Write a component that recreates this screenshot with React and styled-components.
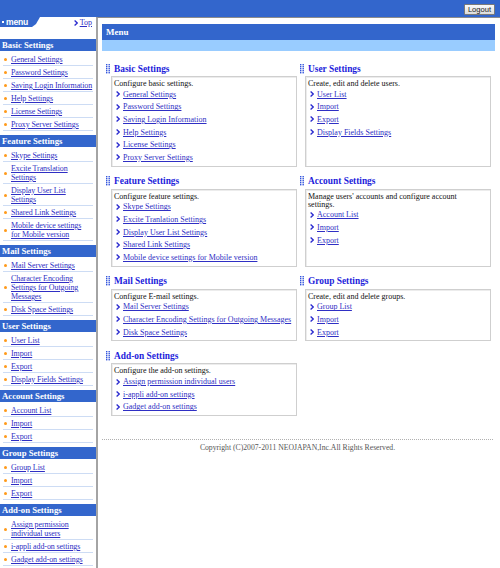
import React from 'react';
import styled, { createGlobalStyle } from 'styled-components';

const GlobalStyle = createGlobalStyle`
  html, body {
    margin: 0;
    padding: 0;
    overflow: hidden;
    background: #fff;
    font-family: 'Liberation Serif', 'Times New Roman', serif;
  }
`;

const BLUE = '#3366cc';
const LINK = '#2f2fc4';

const sideMenu = [
  {
    title: 'Basic Settings',
    items: ['General Settings', 'Password Settings', 'Saving Login Information', 'Help Settings', 'License Settings', 'Proxy Server Settings'],
  },
  {
    title: 'Feature Settings',
    items: ['Skype Settings', 'Excite Translation\nSettings', 'Display User List\nSettings', 'Shared Link Settings', 'Mobile device settings\nfor Mobile version'],
  },
  {
    title: 'Mail Settings',
    items: ['Mail Server Settings', 'Character Encoding\nSettings for Outgoing\nMessages', 'Disk Space Settings'],
  },
  { title: 'User Settings', items: ['User List', 'Import', 'Export', 'Display Fields Settings'] },
  { title: 'Account Settings', items: ['Account List', 'Import', 'Export'] },
  { title: 'Group Settings', items: ['Group List', 'Import', 'Export'] },
  {
    title: 'Add-on Settings',
    items: ['Assign permission\nindividual users', 'i-appli add-on settings', 'Gadget add-on settings'],
  },
];

const panels = [
  {
    title: 'Basic Settings',
    desc: 'Configure basic settings.',
    links: ['General Settings', 'Password Settings', 'Saving Login Information', 'Help Settings', 'License Settings', 'Proxy Server Settings'],
  },
  {
    title: 'User Settings',
    desc: 'Create, edit and delete users.',
    links: ['User List', 'Import', 'Export', 'Display Fields Settings'],
  },
  {
    title: 'Feature Settings',
    desc: 'Configure feature settings.',
    links: ['Skype Settings', 'Excite Tranlation Settings', 'Display User List Settings', 'Shared Link Settings', 'Mobile device settings for Mobile version'],
  },
  {
    title: 'Account Settings',
    desc: "Manage users' accounts and configure account\nsettings.",
    links: ['Account List', 'Import', 'Export'],
  },
  {
    title: 'Mail Settings',
    desc: 'Configure E-mail settings.',
    links: ['Mail Server Settings', 'Character Encoding Settings for Outgoing Messages', 'Disk Space Settings'],
  },
  {
    title: 'Group Settings',
    desc: 'Create, edit and delete groups.',
    links: ['Group List', 'Import', 'Export'],
  },
  {
    title: 'Add-on Settings',
    desc: 'Configure the add-on settings.',
    links: ['Assign permission individual users', 'i-appli add-on settings', 'Gadget add-on settings'],
  },
];

const Page = styled.div`
  width: 500px;
  height: 568px;
  overflow: hidden;
  display: flex;
  flex-direction: column;
`;

const TopBar = styled.div`
  height: 17px;
  flex-shrink: 0;
  background: ${BLUE};
  display: flex;
  justify-content: flex-end;
  align-items: flex-start;
  padding: 4px 5px 0 0;
  box-sizing: border-box;
`;

const LogoutButton = styled.button`
  width: 31px;
  height: 11px;
  padding: 0;
  border: 1px solid #7a7a7a;
  border-radius: 1px;
  background: linear-gradient(#fafafa, #dcdcdc);
  font-family: 'Liberation Sans', Arial, sans-serif;
  font-size: 7.6px;
  line-height: 9px;
  color: #222;
`;

const Body = styled.div`
  flex: 1;
  display: flex;
  min-height: 0;
`;

const Sidebar = styled.div`
  width: 96px;
  flex-shrink: 0;
`;

const SideTop = styled.div`
  height: 22px;
  display: flex;
  align-items: flex-start;
  justify-content: space-between;
`;

const MenuTab = styled.div`
  width: 40px;
  height: 10px;
  background: ${BLUE};
  clip-path: polygon(0 0, 40px 0, 36px 7px, 32px 10px, 0 10px);
  display: flex;
  align-items: center;
  gap: 1px;
  padding-left: 2px;
  box-sizing: border-box;
  color: #fff;
  font-family: 'Liberation Sans', Arial, sans-serif;
  font-weight: bold;
  font-size: 8.6px;
  letter-spacing: -0.2px;
`;

const TabDot = styled.span`
  width: 2px;
  height: 2px;
  background: #fff;
  margin-right: 1px;
`;

const TopLink = styled.a`
  display: flex;
  align-items: center;
  gap: 2px;
  margin: 1px 4px 0 0;
  font-size: 8px;
  line-height: 10px;
  color: ${LINK};
  text-decoration: underline;
`;

const SideHeader = styled.div`
  height: 12px;
  background: ${BLUE};
  color: #fff;
  font-weight: bold;
  font-size: 8.7px;
  line-height: 12px;
  padding-left: 2px;
  white-space: nowrap;
`;

const SideList = styled.div`
  padding: 2px 0 4px;
`;

const SideItem = styled.div`
  display: flex;
  align-items: center;
  margin: 0 3px;
  padding: 2px 0 1px 1px;
  border-bottom: 1px solid #cddcf4;
`;

const Bullet = styled.span`
  width: 3px;
  height: 3px;
  border-radius: 50%;
  background: #ff9a1a;
  flex-shrink: 0;
  margin-right: 4px;
`;

const SideLink = styled.a`
  font-size: 8px;
  line-height: 9px;
  letter-spacing: -0.1px;
  color: ${LINK};
  text-decoration: underline;
  white-space: pre;
`;

const Main = styled.div`
  flex: 1;
  border-top: 1px solid #8c8c8c;
  border-left: 2px solid #a4a4a4;
  padding: 6px 5px 0 4px;
  box-sizing: border-box;
`;

const MenuBar = styled.div`
  height: 16px;
  background: ${BLUE};
  color: #fff;
  font-weight: bold;
  font-size: 9px;
  line-height: 16px;
  padding-left: 4px;
`;

const MenuBand = styled.div`
  height: 11px;
  background: #99ccff;
`;

const Grid = styled.div`
  display: grid;
  grid-template-columns: 192px 192px;
  column-gap: 2px;
  margin: 10px 0 0 3px;
`;

const Section = styled.div`
  display: flex;
  flex-direction: column;
  margin-bottom: 7px;
`;

const SectionTitle = styled.div`
  height: 15px;
  display: flex;
  align-items: center;
  padding-left: 1px;
  color: #1d1ddb;
  font-weight: bold;
  font-size: 9.4px;
`;

const TitleText = styled.span`
  margin-left: 4px;
`;

const Box = styled.div`
  flex: 1;
  margin-left: 6px;
  border: 1px solid #cfcfcf;
  box-shadow: inset 1px 1px 0 #ececec;
  padding: 3px 4px 2px 2px;
`;

const Desc = styled.div`
  font-size: 8px;
  line-height: 8px;
  color: #111;
  white-space: pre-line;
`;

const LinkRow = styled.div`
  height: 12.6px;
  display: flex;
  align-items: center;
  padding-left: 2px;
  gap: 3px;
`;

const BoxLink = styled.a`
  font-size: 8px;
  line-height: 9px;
  color: ${LINK};
  text-decoration: underline;
  white-space: nowrap;
`;

const Footer = styled.div`
  margin: 16px 2px 0 0;
  border-top: 1px dotted #b0b0b0;
  padding-top: 3px;
  text-align: center;
  font-size: 7.7px;
  line-height: 10px;
  color: #555;
`;

const Chevron = () => (
  <svg width="4" height="6" viewBox="0 0 4 6">
    <polyline points="0.6,0.6 3.2,3 0.6,5.4" fill="none" stroke="#2a2ad0" strokeWidth="1.3" />
  </svg>
);

const Grip = () => (
  <svg width="4" height="10" viewBox="0 0 4 10">
    {[0, 2, 4, 6, 8].map((y) => (
      <React.Fragment key={y}>
        <rect x="0" y={y} width="1.4" height="1.4" fill="#3355dd" />
        <rect x="2.5" y={y} width="1.4" height="1.4" fill="#3355dd" />
      </React.Fragment>
    ))}
  </svg>
);

const App = () => {
  return (
    <Page>
      <GlobalStyle />
      <TopBar>
        <LogoutButton>Logout</LogoutButton>
      </TopBar>
      <Body>
        <Sidebar>
          <SideTop>
            <MenuTab>
              <TabDot />
              menu
            </MenuTab>
            <TopLink>
              <Chevron />
              Top
            </TopLink>
          </SideTop>
          {sideMenu.map((group) => (
            <div key={group.title}>
              <SideHeader>{group.title}</SideHeader>
              <SideList>
                {group.items.map((item, i) => (
                  <SideItem key={i}>
                    <Bullet />
                    <SideLink>{item}</SideLink>
                  </SideItem>
                ))}
              </SideList>
            </div>
          ))}
        </Sidebar>
        <Main>
          <MenuBar>Menu</MenuBar>
          <MenuBand />
          <Grid>
            {panels.map((p) => (
              <Section key={p.title}>
                <SectionTitle>
                  <Grip />
                  <TitleText>{p.title}</TitleText>
                </SectionTitle>
                <Box>
                  <Desc>{p.desc}</Desc>
                  {p.links.map((l, i) => (
                    <LinkRow key={i}>
                      <Chevron />
                      <BoxLink>{l}</BoxLink>
                    </LinkRow>
                  ))}
                </Box>
              </Section>
            ))}
          </Grid>
          <Footer>Copyright (C)2007-2011 NEOJAPAN,Inc.All Rights Reserved.</Footer>
        </Main>
      </Body>
    </Page>
  );
};

export default App;
